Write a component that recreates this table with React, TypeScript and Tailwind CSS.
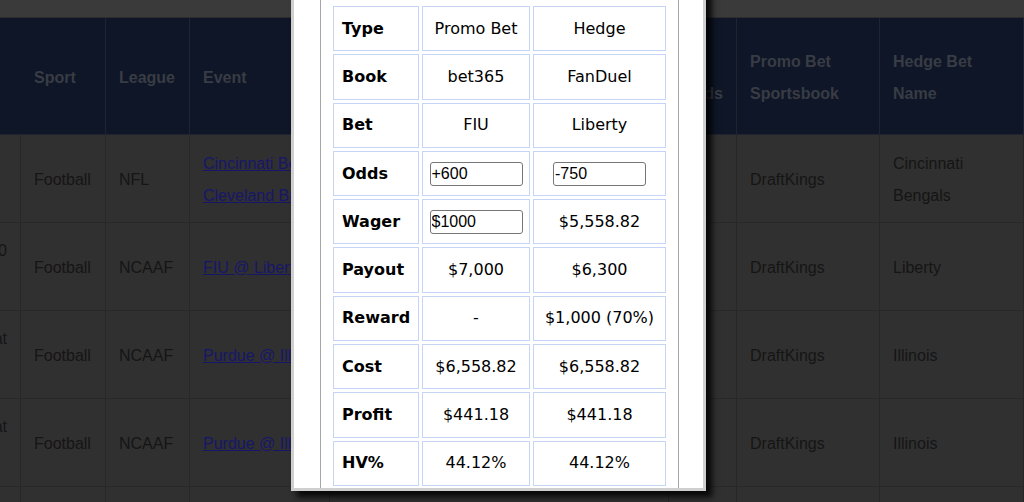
import React from "react";

const headers: string[][] = [
  ["", ""],
  ["Sport"],
  ["League"],
  ["Event"],
  ["Promo Bet", "Name"],
  ["\u00a0", "Odds"],
  ["Promo Bet", "Sportsbook"],
  ["Hedge Bet", "Name"],
];

type Row = {
  first: string;
  league: string;
  event: string[];
  hedge: string[];
};

const rows: Row[] = [
  { first: "", league: "NFL", event: ["Cincinnati Bengals @", "Cleveland Browns"], hedge: ["Cincinnati", "Bengals"] },
  { first: "1:00", league: "NCAAF", event: ["FIU @ Liberty"], hedge: ["Liberty"] },
  { first: "Flat", league: "NCAAF", event: ["Purdue @ Illinois"], hedge: ["Illinois"] },
  { first: "Flat", league: "NCAAF", event: ["Purdue @ Illinois"], hedge: ["Illinois"] },
  { first: "", league: "NCAAF", event: ["Purdue @ Illinois"], hedge: ["Illinois"] },
];

const calc: [string, React.ReactNode, React.ReactNode][] = [
  ["Type", "Promo Bet", "Hedge"],
  ["Book", "bet365", "FanDuel"],
  ["Bet", "FIU", "Liberty"],
  ["Odds", <OddsInput value="+600" />, <OddsInput value="-750" />],
  ["Wager", <OddsInput value="$1000" />, "$5,558.82"],
  ["Payout", "$7,000", "$6,300"],
  ["Reward", "-", "$1,000 (70%)"],
  ["Cost", "$6,558.82", "$6,558.82"],
  ["Profit", "$441.18", "$441.18"],
  ["HV%", "44.12%", "44.12%"],
];

function OddsInput({ value }: { value: string }) {
  return (
    <input
      type="text"
      defaultValue={value}
      className="w-[93px] h-[24px] border border-[#767676] rounded-[3px] px-[1px] bg-white text-[16px] text-black outline-none"
      style={{ fontFamily: '"Liberation Sans", Arial, sans-serif' }}
    />
  );
}

function Cell({ children, className = "" }: { children?: React.ReactNode; className?: string }) {
  return (
    <div className={`flex items-center px-[13px] border-r border-b border-[#282828] overflow-hidden ${className}`}>
      {children}
    </div>
  );
}

export default function App() {
  return (
    <div
      className="relative w-[1024px] h-[502px] overflow-hidden bg-[#303030] text-[16px] leading-[32px]"
      style={{ fontFamily: '"Liberation Sans", Arial, sans-serif' }}
    >
      {/* dimmed page behind the dialog */}
      <div className="h-[18px] bg-[#3a3a3a] border-b border-[#2c2c2c]" />
      <div className="grid grid-cols-[21px_85px_84px_140px_339px_68px_143px_144px] grid-rows-[117px_88px_88px_88px_88px_88px]">
        {headers.map((h, i) => (
          <div
            key={"h" + i}
            className="flex flex-col justify-center px-[13px] pt-[3px] bg-[#0f1627] border-r border-b border-[#1f2430] font-bold text-[#383c44] whitespace-nowrap overflow-hidden"
          >
            {h.map((line, j) => (
              <span key={j}>{line || "\u00a0"}</span>
            ))}
          </div>
        ))}
        {rows.map((r, i) => (
          <React.Fragment key={"r" + i}>
            <div className="flex flex-col justify-center items-end pr-[13px] border-r border-b border-[#282828] overflow-hidden text-[#151515] whitespace-nowrap">
              <span>{r.first || "\u00a0"}</span>
              <span>{"\u00a0"}</span>
            </div>
            <Cell className="pt-[2px] text-[#151515]">Football</Cell>
            <Cell className="pt-[2px] text-[#151515]">{r.league}</Cell>
            <Cell className="flex-col items-start justify-center pt-[2px] whitespace-nowrap">
              {r.event.map((e, j) => (
                <span key={j} className="text-[#17176a] underline">
                  {e}
                </span>
              ))}
            </Cell>
            <Cell />
            <Cell />
            <Cell className="pt-[2px] text-[#151515]">DraftKings</Cell>
            <Cell className="flex-col items-start justify-center pt-[2px] text-[#151515]">
              {r.hedge.map((e, j) => (
                <span key={j}>{e}</span>
              ))}
            </Cell>
          </React.Fragment>
        ))}
      </div>

      {/* hedge calculator dialog */}
      <div className="absolute left-[291px] top-[-20px] w-[415px] h-[511px] bg-white border-[3px] border-[#cfcfcf] shadow-[6px_6px_6px_rgba(0,0,0,0.85)] flex">
        <div
          className="ml-[26px] w-[359px] h-full border-l border-r border-[#a6a6a6] pl-[12px] pt-[23px] text-black"
          style={{ fontFamily: '"DejaVu Sans", Verdana, sans-serif' }}
        >
          <div className="grid grid-cols-[86px_108px_133px] auto-rows-[45.3px] gap-x-[3px] gap-y-[3px] text-[16px] leading-[20px]">
            {calc.map(([label, a, b]) => (
              <React.Fragment key={label}>
                <div className="flex items-center pl-[8px] border border-[#c6d4f6] font-bold">{label}</div>
                <div className="flex items-center justify-center border border-[#c6d4f6]">{a}</div>
                <div className="flex items-center justify-center border border-[#c6d4f6]">{b}</div>
              </React.Fragment>
            ))}
          </div>
        </div>
      </div>
    </div>
  );
}
